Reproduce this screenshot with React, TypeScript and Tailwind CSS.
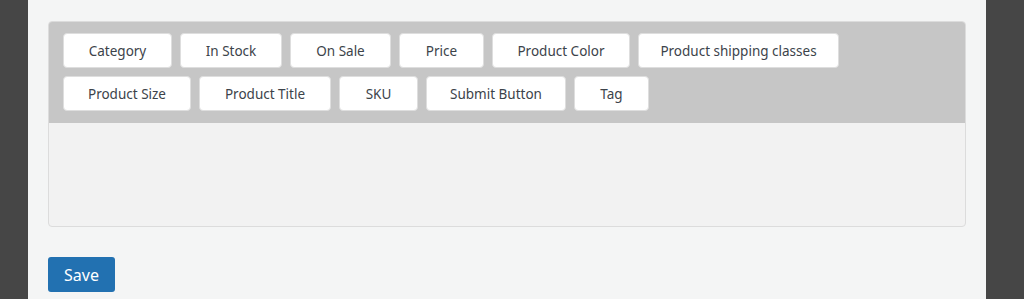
import React from "react";

const rows = [
  [
    { label: "Category", w: "w-[109px]" },
    { label: "In Stock", w: "w-[102px]" },
    { label: "On Sale", w: "w-[101px]" },
    { label: "Price", w: "w-[85px]" },
    { label: "Product Color", w: "w-[138px]" },
    { label: "Product shipping classes", w: "w-[201px]" },
  ],
  [
    { label: "Product Size", w: "w-[128px]" },
    { label: "Product Title", w: "w-[132px]" },
    { label: "SKU", w: "w-[79px]" },
    { label: "Submit Button", w: "w-[140px]" },
    { label: "Tag", w: "w-[75px]" },
  ],
];

const App = () => {
  return (
    <div className="flex h-[299px] w-[1024px] overflow-hidden font-['Noto_Sans','Open_Sans',sans-serif]">
      <div className="w-[28px] bg-[#464646]" />
      <div className="flex-1 bg-[#f4f5f5] px-[20px] pt-[21px]">
        <div className="rounded-[4px] border border-[#dcdcdc] bg-[#f2f2f2] overflow-hidden">
          <div className="flex flex-col gap-[8px] bg-[#c6c6c6] px-[14px] pt-[11px] pb-[12px]">
            {rows.map((row, i) => (
              <div key={i} className="flex gap-[8px]">
                {row.map((b) => (
                  <button
                    key={b.label}
                    className={`${b.w} h-[35px] rounded-[4px] border border-[#dedede] bg-white pt-[2px] text-[13.5px] text-[#3c434a]`}
                  >
                    {b.label}
                  </button>
                ))}
              </div>
            ))}
          </div>
          <div className="h-[103px]" />
        </div>
        <button className="mt-[30px] h-[35px] w-[67px] rounded-[3px] bg-[#2271b1] pt-[1px] text-[16px] text-white">
          Save
        </button>
      </div>
      <div className="w-[38px] bg-[#464646]" />
    </div>
  );
};

export default App;
